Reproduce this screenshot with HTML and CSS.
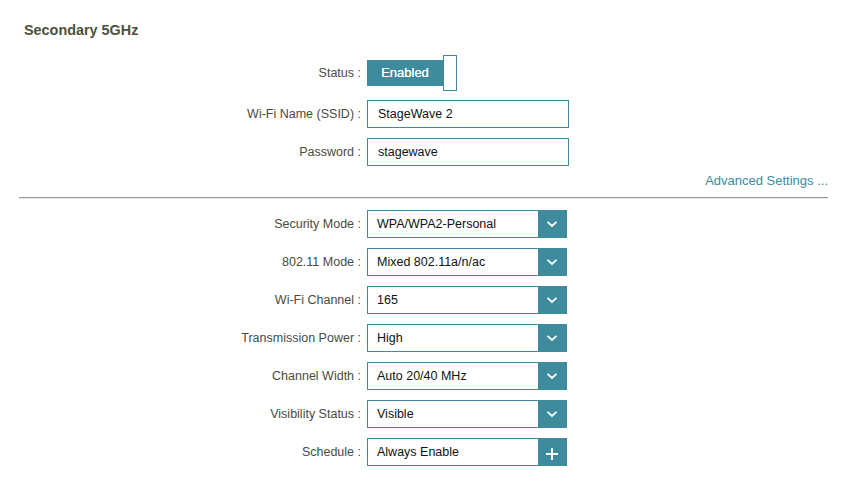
FILE: index.html
```html
<!DOCTYPE html>
<html>
<head>
<meta charset="utf-8">
<link rel="stylesheet" href="styles.css">
</head>
<body>
<div class="page">
  <h2 class="heading">Secondary 5GHz</h2>

  <div class="row row-status">
    <div class="label">Status :</div>
    <div class="toggle">
      <span class="toggle-on">Enabled</span>
      <span class="toggle-knob"></span>
    </div>
  </div>

  <div class="row row-first">
    <div class="label">Wi-Fi Name (SSID) :</div>
    <div class="input">StageWave 2</div>
  </div>

  <div class="row">
    <div class="label">Password :</div>
    <div class="input">stagewave</div>
  </div>

  <div class="advanced">Advanced Settings ...</div>
  <div class="divider"></div>

  <div class="row row-sel-first">
    <div class="label">Security Mode :</div>
    <div class="select"><span class="value">WPA/WPA2-Personal</span><span class="btn"><svg width="12" height="8" viewBox="0 0 12 8"><path d="M1.5 1.8 L6 6 L10.5 1.8" fill="none" stroke="#fff" stroke-width="1.8"/></svg></span></div>
  </div>

  <div class="row">
    <div class="label">802.11 Mode :</div>
    <div class="select"><span class="value">Mixed 802.11a/n/ac</span><span class="btn"><svg width="12" height="8" viewBox="0 0 12 8"><path d="M1.5 1.8 L6 6 L10.5 1.8" fill="none" stroke="#fff" stroke-width="1.8"/></svg></span></div>
  </div>

  <div class="row">
    <div class="label">Wi-Fi Channel :</div>
    <div class="select"><span class="value">165</span><span class="btn"><svg width="12" height="8" viewBox="0 0 12 8"><path d="M1.5 1.8 L6 6 L10.5 1.8" fill="none" stroke="#fff" stroke-width="1.8"/></svg></span></div>
  </div>

  <div class="row">
    <div class="label">Transmission Power :</div>
    <div class="select"><span class="value">High</span><span class="btn"><svg width="12" height="8" viewBox="0 0 12 8"><path d="M1.5 1.8 L6 6 L10.5 1.8" fill="none" stroke="#fff" stroke-width="1.8"/></svg></span></div>
  </div>

  <div class="row">
    <div class="label">Channel Width :</div>
    <div class="select"><span class="value">Auto 20/40 MHz</span><span class="btn"><svg width="12" height="8" viewBox="0 0 12 8"><path d="M1.5 1.8 L6 6 L10.5 1.8" fill="none" stroke="#fff" stroke-width="1.8"/></svg></span></div>
  </div>

  <div class="row">
    <div class="label">Visibility Status :</div>
    <div class="select"><span class="value">Visible</span><span class="btn"><svg width="12" height="8" viewBox="0 0 12 8"><path d="M1.5 1.8 L6 6 L10.5 1.8" fill="none" stroke="#fff" stroke-width="1.8"/></svg></span></div>
  </div>

  <div class="row">
    <div class="label">Schedule :</div>
    <div class="select"><span class="value">Always Enable</span><span class="btn btn-plus"><svg width="14" height="14" viewBox="0 0 14 14"><path d="M7 1 V13 M1 7 H13" fill="none" stroke="#fff" stroke-width="2"/></svg></span></div>
  </div>
</div>
</body>
</html>
```
FILE: styles.css
```css
html, body {
  margin: 0;
  padding: 0;
  background: #ffffff;
}
body {
  font-family: "Liberation Sans", Arial, sans-serif;
  width: 856px;
  height: 485px;
  overflow: hidden;
}
.page {
  padding: 22px 28px 0 19px;
}
.heading {
  margin: 0 0 0 5px;
  font-size: 14.4px;
  line-height: 16px;
  font-weight: bold;
  color: #4c5039;
}
.row {
  display: grid;
  grid-template-columns: 342px auto;
  column-gap: 6px;
  align-items: center;
  margin-top: 10px;
  height: 28px;
}
.row-status {
  margin-top: 17px;
  height: 36px;
}
.row-first {
  margin-top: 9px;
}
.row-sel-first {
  margin-top: 11px;
}
.label {
  text-align: right;
  font-size: 12.5px;
  color: #4a4b3f;
  white-space: nowrap;
}
.toggle {
  display: flex;
  align-items: center;
}
.toggle-on {
  width: 76px;
  height: 26px;
  background: #3d8b9d;
  color: #ffffff;
  font-size: 13px;
  line-height: 26px;
  text-align: center;
  text-shadow: 0 0 0.3px #ffffff;
}
.toggle-knob {
  width: 12px;
  height: 34px;
  border: 1px solid #3d8b9d;
  background: #ffffff;
}
.input {
  box-sizing: border-box;
  width: 202px;
  height: 28px;
  border: 1px solid #3d8b9d;
  padding-left: 10px;
  font-size: 12.5px;
  line-height: 26px;
  color: #111111;
}
.select {
  box-sizing: border-box;
  width: 200px;
  height: 28px;
  border: 1px solid #3d8b9d;
  display: flex;
  align-items: stretch;
}
.select .value {
  flex: 1;
  padding-left: 9px;
  font-size: 12.5px;
  line-height: 26px;
  color: #111111;
}
.select .btn {
  width: 28px;
  background: #3d8b9d;
  display: flex;
  align-items: center;
  justify-content: center;
}
.btn-plus svg {
  margin-top: 3px;
}
.advanced {
  margin-top: 7px;
  text-align: right;
  font-size: 13px;
  line-height: 16px;
  color: #3d8b9d;
}
.divider {
  margin-top: 8px;
  height: 1px;
  background: #9a9a9a;
  border-bottom: 1px solid #e6e6e6;
}
```
